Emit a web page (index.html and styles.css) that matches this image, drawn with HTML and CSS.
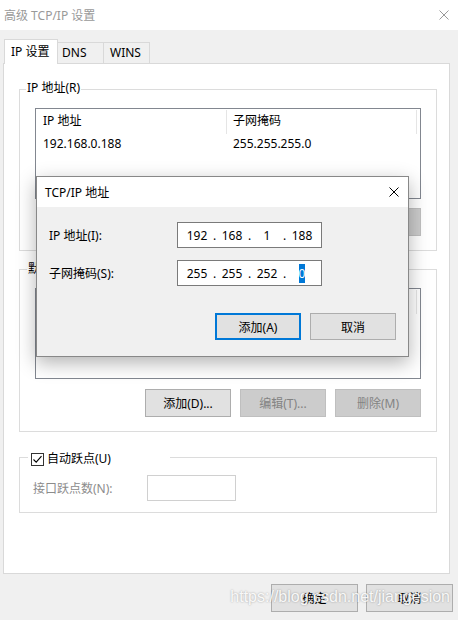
FILE: index.html
```html
<!DOCTYPE html>
<html lang="zh-CN">
<head>
<meta charset="utf-8">
<title>高级 TCP/IP 设置</title>
<link rel="stylesheet" href="styles.css">
</head>
<body>
<div class="titlebar">
  <span class="title">高级 TCP/IP 设置</span>
  <svg class="close-icon" width="10" height="10" viewBox="0 0 10 10"><path d="M0.5 0.5L9.5 9.5M9.5 0.5L0.5 9.5" stroke="#999" stroke-width="1" fill="none"/></svg>
</div>
<div class="tabs">
  <div class="tab active">IP 设置</div>
  <div class="tab tab-dns">DNS</div>
  <div class="tab tab-wins">WINS</div>
</div>
<div class="panel">
  <div class="group g1">
    <span class="legend">IP 地址(R)</span>
    <div class="listbox">
      <div class="lv-head"><span class="c1">IP 地址</span><span class="c2">子网掩码</span></div>
      <div class="lv-row"><span class="c1">192.168.0.188</span><span class="c2">255.255.255.0</span></div>
    </div>
    <div class="btnrow">
      <button class="btn">添加(A)...</button>
      <button class="btn" disabled>编辑(T)...</button>
      <button class="btn" disabled>删除(V)</button>
    </div>
  </div>
  <div class="group g2">
    <span class="legend">默认网关(F):</span>
    <div class="listbox">
      <div class="lv-head"><span class="c1">网关</span><span class="c2">跃点数</span></div>
    </div>
    <div class="btnrow">
      <button class="btn">添加(D)...</button>
      <button class="btn" disabled>编辑(T)...</button>
      <button class="btn" disabled>删除(M)</button>
    </div>
  </div>
  <div class="group g3">
    <span class="legend check-legend">
      <span class="checkbox"><svg width="11" height="11" viewBox="0 0 11 11"><path d="M1.5 5.5L4.2 8.2L9.5 2.2" stroke="#000" stroke-width="1.1" fill="none"/></svg></span>
      <span>自动跃点(U)</span>
    </span>
    <div class="metric-row">
      <span class="metric-label">接口跃点数(N):</span>
      <span class="metric-input"></span>
    </div>
  </div>
</div>
<div class="footer">
  <button class="btn">确定</button>
  <button class="btn">取消</button>
</div>
<div class="watermark">https://blog.csdn.net/jiangesion</div>

<div class="dialog">
  <div class="dlg-title">
    <span>TCP/IP 地址</span>
    <svg class="close-icon" width="10" height="10" viewBox="0 0 10 10"><path d="M0.5 0.5L9.5 9.5M9.5 0.5L0.5 9.5" stroke="#000" stroke-width="1" fill="none"/></svg>
  </div>
  <div class="dlg-body">
    <div class="field">
      <span class="field-label">IP 地址(I):</span>
      <div class="ipbox">
        <span class="seg">192</span><span class="dot">.</span><span class="seg">168</span><span class="dot">.</span><span class="seg">1</span><span class="dot">.</span><span class="seg">188</span>
      </div>
    </div>
    <div class="field field2">
      <span class="field-label">子网掩码(S):</span>
      <div class="ipbox">
        <span class="seg">255</span><span class="dot">.</span><span class="seg">255</span><span class="dot">.</span><span class="seg">252</span><span class="dot">.</span><span class="seg"><span class="sel">0</span></span>
      </div>
    </div>
    <div class="dlg-buttons">
      <button class="btn primary">添加(A)</button>
      <button class="btn">取消</button>
    </div>
  </div>
</div>
</body>
</html>
```
FILE: styles.css
```css
* { box-sizing: border-box; }
html, body { margin: 0; padding: 0; }
body {
  width: 458px;
  height: 620px;
  background: #f0f0f0;
  font-family: "Noto Sans", "Noto Sans CJK SC", sans-serif;
  font-size: 12px;
  color: #000;
  position: relative;
  overflow: hidden;
}
.titlebar {
  height: 30px;
  background: #fff;
  display: flex;
  align-items: center;
  justify-content: space-between;
  padding: 0 9px 0 4px;
}
.title { color: #999; }
.close-icon { display: block; }

.tabs {
  display: flex;
  align-items: flex-end;
  height: 25px;
  margin: 9px 0 -1px 4px;
  position: relative;
  z-index: 1;
}
.tab {
  height: 21px;
  width: 46px;
  margin-bottom: 1px;
  border-top: 1px solid #d9d9d9;
  border-right: 1px solid #d9d9d9;
  line-height: 19px;
  padding-left: 5px;
  white-space: nowrap;
}
.tab-dns { padding-left: 4px; }
.tab-wins { padding-left: 6px; }
.tab.active {
  height: 25px;
  width: 54px;
  margin-bottom: 0;
  background: #fff;
  border: 1px solid #d9d9d9;
  border-bottom: none;
  line-height: 23px;
  padding-left: 6px;
}

.panel {
  margin-left: 3px;
  width: 447px;
  height: 511px;
  background: #fff;
  border: 1px solid #d9d9d9;
  padding: 25px 0 0 15px;
}
.group {
  position: relative;
  width: 418px;
  border: 1px solid #dcdcdc;
  padding: 18px 15px 14px;
}
.g2 { margin-top: 18px; }
.g2 .btnrow { margin-top: 10px; }
.g3 { margin-top: 25px; padding: 17px 0 11px 13px; }
.legend {
  position: absolute;
  left: 6px;
  top: -10px;
  line-height: 16px;
  background: #fff;
  padding: 0 1px;
  white-space: nowrap;
}
.g2 .legend { top: -9px; left: 7px; }
.check-legend {
  top: -7px;
  left: 8px;
  width: 142px;
  display: flex;
  align-items: center;
  padding-left: 3px;
  gap: 3px;
}
.checkbox {
  width: 13px;
  height: 13px;
  border: 1px solid #333;
  background: #fff;
  display: flex;
  align-items: center;
  justify-content: center;
}
.checkbox svg { display: block; }

.listbox {
  height: 91px;
  border: 1px solid #828790;
  background: #fff;
}
.lv-head { display: flex; height: 25px; }
.lv-head span {
  height: 24px;
  margin-top: 1px;
  line-height: 22px;
  border-right: 1px solid #e5e5e5;
}
.c1 { width: 191px; padding-left: 7px; }
.c2 { width: 190px; padding-left: 6px; }
.lv-row { display: flex; height: 20px; line-height: 20px; }

.btnrow {
  display: flex;
  justify-content: flex-end;
  gap: 9px;
  margin-top: 9px;
}
.btn {
  width: 86px;
  height: 28px;
  padding: 0;
  font: inherit;
  color: #000;
  background: #e1e1e1;
  border: 1px solid #adadad;
}
.btn:disabled {
  background: #cccccc;
  border-color: #bfbfbf;
  color: #838383;
}

.metric-row { display: flex; align-items: center; }
.metric-label { width: 114px; color: #8c8c8c; }
.metric-input {
  width: 89px;
  height: 26px;
  border: 1px solid #d0d0d0;
  background: #fff;
}

.footer {
  display: flex;
  justify-content: flex-end;
  gap: 8px;
  margin-top: 10px;
  padding-right: 5px;
}
.footer .btn { width: 87px; }

.watermark {
  position: absolute;
  right: 8px;
  top: 588px;
  font-family: "Liberation Sans", sans-serif;
  font-size: 16px;
  color: rgba(255, 255, 255, 0.92);
  text-shadow: 0 0 2px rgba(0, 0, 0, 0.35);
  white-space: nowrap;
}

.dialog {
  position: absolute;
  left: 36px;
  top: 176px;
  width: 373px;
  height: 181px;
  border: 1px solid #888;
  background: #f0f0f0;
  box-shadow: 0 6px 18px rgba(0, 0, 0, 0.3);
  z-index: 5;
}
.dlg-title {
  height: 30px;
  background: #fff;
  display: flex;
  align-items: center;
  justify-content: space-between;
  padding: 0 9px 0 8px;
}
.dlg-body { padding: 15px 12px 0 12px; }
.field { display: flex; align-items: center; }
.field2 { margin-top: 12px; }
.field-label { width: 128px; }
.ipbox {
  display: flex;
  align-items: center;
  width: 145px;
  height: 26px;
  border: 1px solid #7a7a7a;
  background: #fff;
  padding-left: 5px;
}
.seg { width: 28px; text-align: center; }
.dot { width: 7px; text-align: center; }
.sel {
  display: inline-block;
  background: #0078d7;
  color: #fff;
  line-height: 19px;
}
.dlg-buttons {
  display: flex;
  justify-content: flex-end;
  gap: 9px;
  margin-top: 27px;
}
.dlg-buttons .btn { height: 27px; }
.btn.primary { border: 2px solid #0078d7; }
```
